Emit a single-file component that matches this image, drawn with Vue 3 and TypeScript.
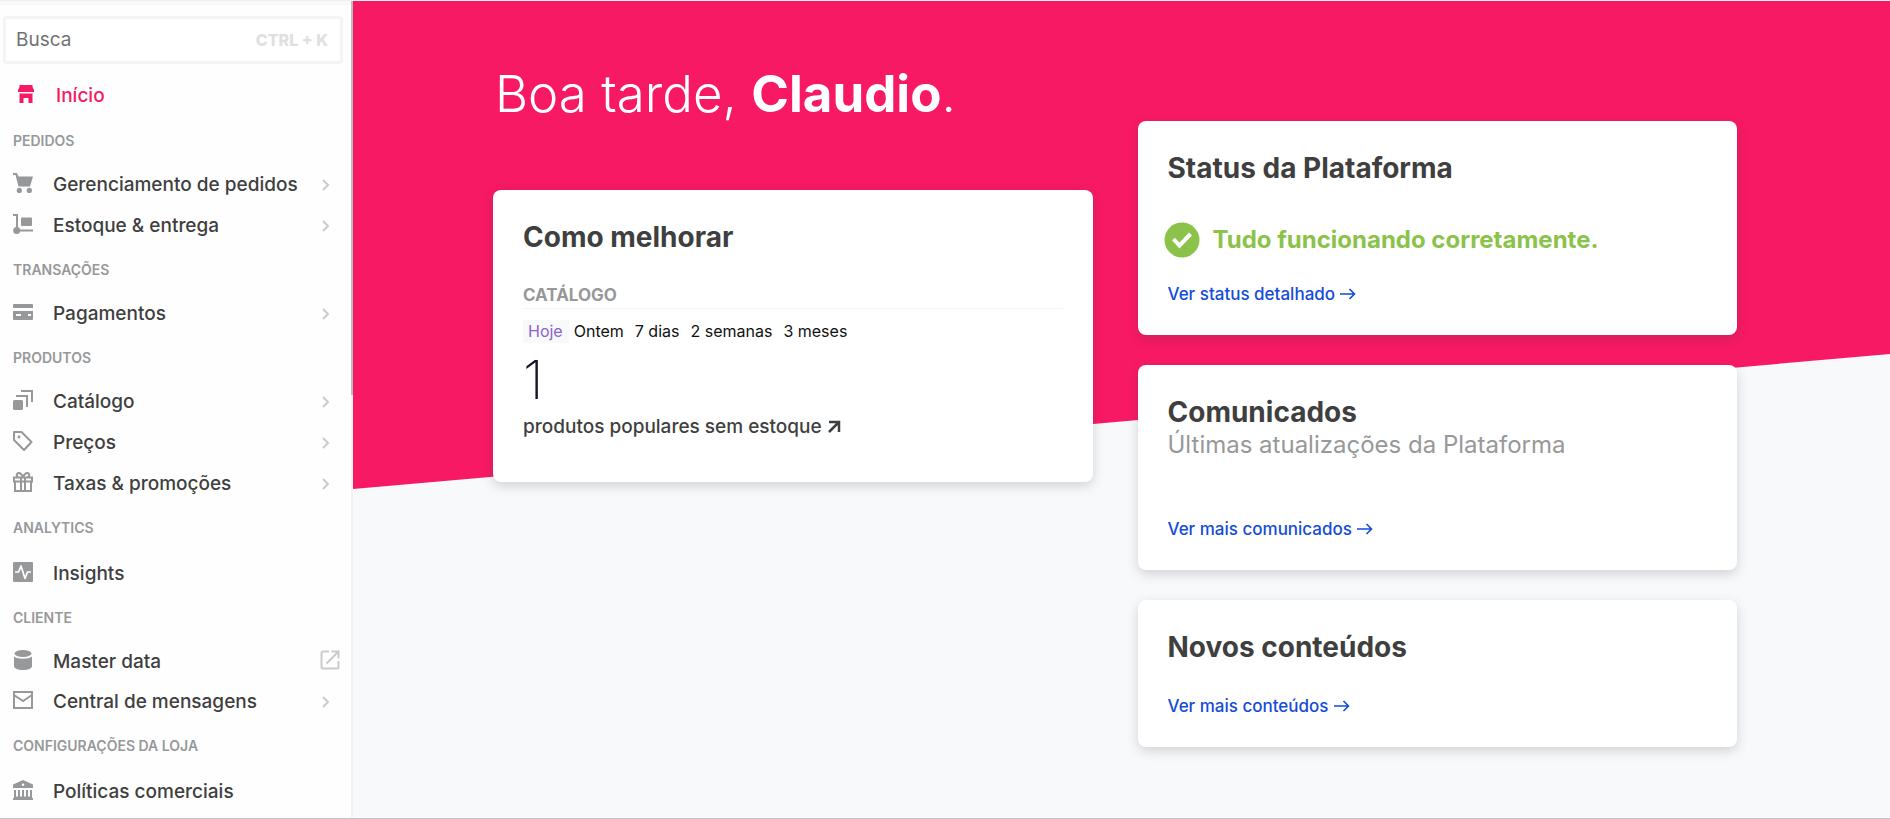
<script setup lang="ts">
import { ref } from 'vue'

interface NavItem {
  label: string
  icon: string
  end?: 'chevron' | 'external'
}

interface NavGroup {
  title: string
  roomy?: boolean
  items: NavItem[]
}

const groups: NavGroup[] = [
  {
    title: 'PEDIDOS',
    items: [
      { label: 'Gerenciamento de pedidos', icon: 'cart', end: 'chevron' },
      { label: 'Estoque & entrega', icon: 'trolley', end: 'chevron' },
    ],
  },
  { title: 'TRANSAÇÕES', items: [{ label: 'Pagamentos', icon: 'card', end: 'chevron' }] },
  {
    title: 'PRODUTOS',
    items: [
      { label: 'Catálogo', icon: 'layers', end: 'chevron' },
      { label: 'Preços', icon: 'tag', end: 'chevron' },
      { label: 'Taxas & promoções', icon: 'gift', end: 'chevron' },
    ],
  },
  { title: 'ANALYTICS', roomy: true, items: [{ label: 'Insights', icon: 'pulse' }] },
  {
    title: 'CLIENTE',
    items: [
      { label: 'Master data', icon: 'database', end: 'external' },
      { label: 'Central de mensagens', icon: 'mail', end: 'chevron' },
    ],
  },
  {
    title: 'CONFIGURAÇÕES DA LOJA',
    roomy: true,
    items: [{ label: 'Políticas comerciais', icon: 'bank' }],
  },
]

const periods = ['Hoje', 'Ontem', '7 dias', '2 semanas', '3 meses']
const period = ref('Hoje')
const query = ref('')
</script>

<template>
  <div class="app">
    <aside class="sidebar">
      <form class="search" role="search" @submit.prevent>
        <input v-model="query" type="text" placeholder="Busca" aria-label="Busca" />
        <kbd>CTRL + K</kbd>
      </form>

      <nav>
        <a class="home" href="#inicio" aria-current="page">
          <svg class="icon" viewBox="0 0 20 20" aria-hidden="true">
            <path d="M3.5 1h13v2l1.5 3v2H2V6l1.5-3zM3.5 9.5h13V19h-4v-5h-5v5h-4z" />
          </svg>
          <span>Início</span>
        </a>

        <section v-for="group in groups" :key="group.title">
          <h2 :class="{ roomy: group.roomy }">{{ group.title }}</h2>
          <a
            v-for="item in group.items"
            :key="item.label"
            class="item"
            :class="{ outside: item.end === 'external' }"
            href="#"
          >
            <svg class="icon" viewBox="0 0 20 20" aria-hidden="true">
              <template v-if="item.icon === 'cart'">
                <path d="M0 0h4l1.5 3.5H20L17 13.5H5.5L2.500 2H0z" />
                <circle cx="6.3" cy="17.4" r="2.6" /><circle cx="16.3" cy="17.4" r="2.6" />
              </template>
              <template v-else-if="item.icon === 'trolley'">
                <path d="M0 0h5v14H3V2H0z" /><rect x="8" y="3.5" width="11" height="8.5" rx="1" />
                <circle cx="3.7" cy="16.5" r="3.5" /><path d="M4 15.5h16v2H4z" />
              </template>
              <template v-else-if="item.icon === 'card'">
                <path d="M1 2h18a1 1 0 0 1 1 1v3H0V3a1 1 0 0 1 1-1z" />
                <path fill-rule="evenodd" d="M0 9h20v8a1 1 0 0 1-1 1H1a1 1 0 0 1-1-1zM3 12v2h5v-2zM15 12v2h3v-2z" />
              </template>
              <template v-else-if="item.icon === 'layers'">
                <rect y="10" width="10" height="10" rx="1.5" />
                <path d="M3 6h11v11M8 1h11v11" fill="none" stroke="currentColor" stroke-width="2" />
              </template>
              <template v-else-if="item.icon === 'tag'">
                <path d="M1 1h7.5l10 10-7.5 8L1 9z" fill="none" stroke="currentColor" stroke-width="2" stroke-linejoin="round" />
                <circle cx="6" cy="6" r="1.4" />
              </template>
              <template v-else-if="item.icon === 'gift'">
                <path d="M1 5.5h18v4H1zM2 10v9h16v-9M8 6v13M12 6v13M10 5.5C9 2 6 0 4.5 1.5S4 5 6 5.5M10 5.5C11 2 14 0 15.5 1.5S16 5 14 5.5" fill="none" stroke="currentColor" stroke-width="2" />
              </template>
              <template v-else-if="item.icon === 'pulse'">
                <rect width="20" height="20" rx="1" />
                <path d="M2 10h3.5l2.5-6 4 12.5 2.5-6.500H18" fill="none" stroke="#fff" stroke-width="1.7" stroke-linejoin="round" />
              </template>
              <template v-else-if="item.icon === 'database'">
                <ellipse cx="10" cy="3.5" rx="8.5" ry="3.5" />
                <path d="M1 6.5c3.5 3 14.5 3 18 0V16c0 5.3-18 5.3-18 0z" />
              </template>
              <template v-else-if="item.icon === 'mail'">
                <path d="M1 2h18v16H1zM1 5l9 6 9-6" fill="none" stroke="currentColor" stroke-width="2" />
              </template>
              <template v-else>
                <path fill-rule="evenodd" d="M10 0l10 4.5V8H0V4.5zM10 3.5a1.3 1.3 0 1 0 0 2.6 1.3 1.3 0 0 0 0-2.600z" />
                <path d="M2 10v7M6 10v7M10 10v7M14 10v7M18 10v7" stroke="currentColor" stroke-width="2" />
                <path d="M1 16.5h18V18h1v2H0v-2h1z" />
              </template>
            </svg>
            <span>{{ item.label }}</span>
            <svg v-if="item.end === 'chevron'" class="chevron" viewBox="0 0 8 12" aria-hidden="true">
              <path d="M1 1l5 5-5 5" />
            </svg>
            <svg v-else-if="item.end === 'external'" class="external" viewBox="0 0 20 20" aria-hidden="true">
              <path d="M9 1.5H3Q1.5 1.5 1.5 3v14q0 1.5 1.5 1.5h14q1.5 0 1.5-1.5v-6M11.5 1.5h7v7M18.5 1.5L6.5 13.5" />
            </svg>
          </a>
        </section>
      </nav>
      <div class="thumb"></div>
    </aside>

    <main>
      <div class="columns">
        <div class="left">
          <h1>Boa tarde, <b>Claudio</b>.</h1>
          <article class="card">
            <h2>Como melhorar</h2>
            <h3>CATÁLOGO</h3>
            <div class="periods">
              <button
                v-for="p in periods"
                :key="p"
                type="button"
                :class="{ active: p === period }"
                :aria-pressed="p === period"
                @click="period = p"
              >{{ p }}</button>
            </div>
            <p class="count">1</p>
            <a class="metric" href="#">
              produtos populares sem estoque
              <svg viewBox="0 0 14 14" aria-hidden="true"><path d="M2 2h10v10M12 2L2 12" /></svg>
            </a>
          </article>
        </div>

        <div class="right">
          <article class="card">
            <h2>Status da Plataforma</h2>
            <p class="status">
              <svg viewBox="0 0 36 36" aria-hidden="true">
                <circle cx="18" cy="18" r="17.5" />
                <path d="M9.5 17l6 6.5 11-11.5" />
              </svg>
              Tudo funcionando corretamente.
            </p>
            <a class="more" href="#">Ver status detalhado
              <svg viewBox="0 0 16 12" aria-hidden="true"><path d="M0 6h14.5M9.5 1l5 5-5 5" /></svg>
            </a>
          </article>

          <article class="card news">
            <h2>Comunicados</h2>
            <p class="subtitle">Últimas atualizações da Plataforma</p>
            <a class="more" href="#">Ver mais comunicados
              <svg viewBox="0 0 16 12" aria-hidden="true"><path d="M0 6h14.5M9.5 1l5 5-5 5" /></svg>
            </a>
          </article>

          <article class="card fresh">
            <h2>Novos conteúdos</h2>
            <a class="more" href="#">Ver mais conteúdos
              <svg viewBox="0 0 16 12" aria-hidden="true"><path d="M0 6h14.5M9.5 1l5 5-5 5" /></svg>
            </a>
          </article>
        </div>
      </div>
    </main>
  </div>
</template>

<style>
body {
  margin: 0;
}
</style>

<style scoped>
.app {
  box-sizing: border-box;
  display: flex;
  height: 100vh;
  overflow: hidden;
  border-top: 1px solid #f0f0f1;
  border-bottom: 1px solid #c4c5c7;
  background: #f8f9fb;
  color: #3f3f40;
  font-family: Inter, 'Noto Sans', 'Liberation Sans', sans-serif;
}
a {
  color: inherit;
  text-decoration: none;
}
h1,
h2,
h3,
p {
  margin: 0;
}
svg {
  flex: none;
  display: block;
}
.sidebar {
  position: relative;
  box-sizing: border-box;
  flex: none;
  width: 353px;
  padding-top: 15px;
  border-right: 2px solid #f1f2f4;
  background: #fefefe;
  box-shadow: inset 0 4px #f9f9fa;
}
.thumb {
  position: absolute;
  top: 0;
  right: -2px;
  width: 2px;
  height: 394px;
  background: #bbbcbe;
}
.search {
  box-sizing: border-box;
  display: flex;
  align-items: center;
  height: 48px;
  margin: 0 8px 0 3px;
  padding: 0 12px 0 10px;
  border: 3px solid #f2f4f5;
  border-radius: 4px;
  background: #fff;
}
.search input {
  flex: 1;
  min-width: 0;
  padding: 0;
  border: 0;
  outline: 0;
  background: none;
  color: #3f3f40;
  font: 400 19px/24px Inter, 'Noto Sans', sans-serif;
}
.search input::placeholder {
  color: #727273;
  opacity: 1;
}
.search kbd {
  color: #dfe0e1;
  font: 800 16px/24px Inter, 'Noto Sans', sans-serif;
}
.home,
.item {
  display: flex;
  align-items: center;
  height: 41px;
  padding: 0 21px 0 13px;
  font-size: 19px;
  font-weight: 500;
}
.outside {
  height: 40px;
}
.item span {
  flex: 1;
  margin-left: 20px;
}
.home {
  box-sizing: border-box;
  align-items: flex-start;
  height: 53px;
  padding: 20px 0 0 16px;
  color: #f71963;
  line-height: 24px;
}
.home span {
  margin-left: 20px;
}
.icon {
  width: 20px;
  height: 20px;
  margin-bottom: 3px;
  fill: currentColor;
}
.item .icon {
  color: #979899;
}
.chevron {
  width: 8px;
  height: 12px;
}
.external {
  width: 20px;
  height: 20px;
  margin: 0 -10px 3px 0;
}
.chevron,
.external {
  fill: none;
  stroke: #cacbcc;
  stroke-width: 2;
}
nav h2 {
  box-sizing: border-box;
  height: 47px;
  padding: 14px 0 0 13px;
  color: #979899;
  font-size: 14px;
  font-weight: 600;
  line-height: 20px;
}
nav h2.roomy {
  height: 49px;
}
main {
  position: relative;
  flex: 1;
  min-width: 0;
  padding: 0 153px 0 140px;
}
main::before {
  content: '';
  position: absolute;
  inset: 0;
  height: 488px;
  background: #f71963;
  clip-path: polygon(0 0, 100% 0, 100% 353px, 0 100%);
}
.columns {
  position: relative;
  display: grid;
  grid-template-columns: 1fr 1fr;
  gap: 45px;
}
h1 {
  padding: 60px 0 64px 2px;
  color: #fff;
  font-size: 51px;
  font-weight: 300;
  line-height: 65px;
  white-space: nowrap;
}
h1 b {
  font-weight: 700;
}
.right {
  display: flex;
  flex-direction: column;
  gap: 30px;
  padding-top: 120px;
}
.card {
  box-sizing: border-box;
  padding: 30px;
  border-radius: 8px;
  background: #fff;
  box-shadow: 0 4px 12px rgba(61, 62, 64, 0.2);
}
.left .card {
  padding-bottom: 43px;
}
.card h2 {
  font-size: 28px;
  font-weight: 700;
  line-height: 34px;
}
h3 {
  margin-top: 30px;
  padding-bottom: 2px;
  border-bottom: 1px solid #f2f4f5;
  color: #979899;
  font-size: 17px;
  font-weight: 700;
  line-height: 22px;
}
.periods {
  display: flex;
  margin-top: 11px;
}
.periods button {
  padding: 0 6px 0 5px;
  border: 0;
  background: none;
  color: #111;
  font: 400 16px/23px Inter, 'Noto Sans', sans-serif;
}
.periods .active {
  background: #f8f9fb;
  color: #8a63cf;
}
.count {
  margin-top: 9px;
  color: #14142a;
  font-size: 54px;
  font-weight: 200;
  line-height: 56px;
}
.metric {
  display: flex;
  align-items: center;
  gap: 5px;
  margin-top: 7px;
  font-size: 19px;
  font-weight: 500;
  line-height: 24px;
}
.metric svg {
  width: 14px;
  height: 14px;
  fill: none;
  stroke: #3f3f40;
  stroke-width: 2.5;
}
.status {
  display: flex;
  align-items: center;
  gap: 13px;
  margin: 37px 0 0 -4px;
  color: #8bc34a;
  font-size: 24px;
  font-weight: 700;
  line-height: 36px;
}
.status svg {
  width: 36px;
  height: 36px;
}
.status circle {
  fill: #8bc34a;
}
.status path {
  fill: none;
  stroke: #fff;
  stroke-width: 4;
}
.more {
  display: flex;
  align-items: center;
  gap: 5px;
  margin-top: 25px;
  color: #134cd8;
  font-size: 17px;
  font-weight: 500;
  line-height: 22px;
}
.more svg {
  width: 16px;
  height: 12px;
  fill: none;
  stroke: currentColor;
  stroke-width: 1.6;
}
.subtitle {
  color: #979899;
  font-size: 24px;
  line-height: 32px;
}
.news .more {
  margin-top: 57px;
}
.fresh .more {
  margin-top: 31px;
}
</style>
